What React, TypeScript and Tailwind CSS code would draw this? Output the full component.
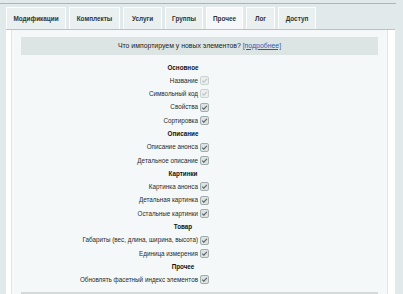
import React from "react";

const tabs = [
  { title: "Модификации", w: 60 },
  { title: "Комплекты", w: 51 },
  { title: "Услуги", w: 39 },
  { title: "Группы", w: 38 },
  { title: "Прочее", w: 37, active: true },
  { title: "Лог", w: 29 },
  { title: "Доступ", w: 38 },
];

type Row = { heading?: string; label?: string; disabled?: boolean };

const rows: Row[] = [
  { heading: "Основное" },
  { label: "Название", disabled: true },
  { label: "Символьный код", disabled: true },
  { label: "Свойства" },
  { label: "Сортировка" },
  { heading: "Описание" },
  { label: "Описание анонса" },
  { label: "Детальное описание" },
  { heading: "Картинки" },
  { label: "Картинка анонса" },
  { label: "Детальная картинка" },
  { label: "Остальные картинки" },
  { heading: "Товар" },
  { label: "Габариты (вес, длина, ширина, высота)" },
  { label: "Единица измерения" },
  { heading: "Прочее" },
  { label: "Обновлять фасетный индекс элементов" },
];

const Checkbox = ({ disabled }: { disabled?: boolean }) => (
  <svg width="9" height="9" viewBox="0 0 9 9" className="block">
    <rect
      x="0.5"
      y="0.5"
      width="8"
      height="8"
      rx="1.5"
      fill={disabled ? "#eaeeee" : "#dde2e2"}
      stroke={disabled ? "#cbd2d2" : "#a4adae"}
    />
    <path
      d="M2.2 4.6 L3.8 6.1 L6.9 2.8"
      fill="none"
      stroke={disabled ? "#bcc4c4" : "#5a6263"}
      strokeWidth="1.1"
    />
  </svg>
);

const App = () => {
  return (
    <div className="w-[403px] h-[294px] overflow-hidden bg-[#e1e9ea] font-['Liberation_Sans',Arial,sans-serif] text-[#111]">
      <div className="h-[3px]" />
      <div className="w-[396px] h-px bg-[#aab6b8]" />
      <div className="h-[3px]" />
      <div className="flex gap-[3px] pl-[6px] h-[22px]">
        {tabs.map((tab) => (
          <div
            key={tab.title}
            style={{ width: tab.w }}
            className={`flex items-center justify-center border border-b-0 border-white text-[6.4px] font-bold text-[#333] ${
              tab.active ? "bg-[#f5f8f8]" : "bg-[#eaf0f0]"
            }`}
          >
            {tab.title}
          </div>
        ))}
      </div>
      <div className="ml-[6px] w-[389px] h-[270px] bg-white border-t border-[#b9c3c4] pl-[5px] pr-[7px]">
        <div className="h-full bg-[#f4f8f8] border-x border-[#dfe6e6] pt-[7px] px-[9px]">
          <div className="h-[18px] bg-[#dde4e4] flex items-center justify-center text-[6.9px] text-[#222]">
            Что импортируем у новых элементов?&nbsp;
            <span className="text-[#1f5fb5] underline">[подробнее]</span>
          </div>
          <div className="pt-[5.6px]">
            {rows.map((row, i) =>
              row.heading ? (
                <div
                  key={i}
                  className="h-[13.31px] w-[324px] flex items-center justify-center text-[6.3px] font-bold"
                >
                  {row.heading}
                </div>
              ) : (
                <div key={i} className="h-[13.31px] flex items-center">
                  <div className="w-[179px] text-right text-[6.3px] text-[#2a2a2a] pr-[2px]">
                    {row.label}
                  </div>
                  <Checkbox disabled={row.disabled} />
                </div>
              )
            )}
          </div>
          <div className="mt-[5.5px] h-[1.5px] bg-[#d3dada]" />
        </div>
      </div>
    </div>
  );
};

export default App;
